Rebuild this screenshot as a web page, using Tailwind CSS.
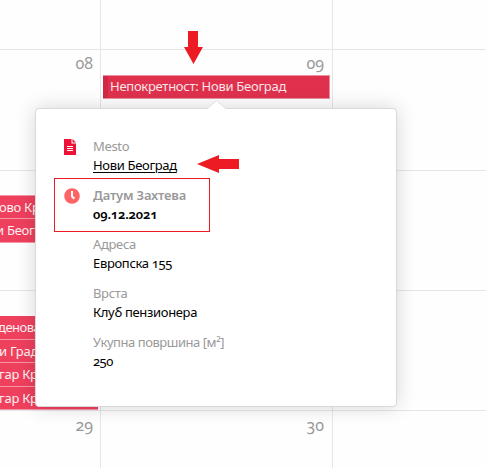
<!DOCTYPE html>
<html lang="sr">
<head>
<meta charset="utf-8">
<title>Календар</title>
<script src="https://cdn.jsdelivr.net/npm/@tailwindcss/browser@4"></script>
</head>
<body class="relative w-[486px] h-[468px] overflow-hidden bg-[#fefefe] font-['Noto_Sans','Open_Sans',sans-serif] oldstyle-nums text-[13px] text-black">
<main class="grid grid-cols-[100px_232px_154px] grid-rows-[49px_121px_120px_120px_58px] w-[486px] h-[468px] text-[#999]">
  <div></div><div class="border-l border-[#e6e6e6]"></div><div class="border-l border-[#e6e6e6]"></div>

  <div class="border-t border-[#e6e6e6] pt-[3px] pr-[7px] text-right text-[16px] leading-[20px]">08</div>
  <div class="border-t border-l border-[#e6e6e6]">
    <div class="h-[25px] pt-[3px] pr-[8px] text-right text-[16px] leading-[20px]">09</div>
    <div class="ml-[2px] mr-[2px] h-[24px] border border-[#e9909f] border-l-0 bg-[#df314d] flex items-center text-[#fbe4e8] whitespace-nowrap">
      <span class="w-[5px] h-full bg-[#d12945] mr-[2px]"></span><span class="tracking-[-0.27px]">Непокретност: Нови Београд</span>
    </div>
  </div>
  <div class="border-t border-l border-[#e6e6e6]"></div>

  <div class="border-t border-[#e6e6e6] pt-[24px] overflow-hidden text-[#fff0f2] whitespace-nowrap tracking-[-0.27px]">
    <div class="h-[24px] w-[98px] bg-[#ef405e] border-y border-[#f795a5] leading-[23px]"><span class="block -ml-[1px]">ово Краљево</span></div>
    <div class="h-[24px] w-[98px] bg-[#ef405e] border-b border-[#f795a5] leading-[23px]"><span class="block -ml-[4px]">и Београд</span></div>
  </div>
  <div class="border-t border-l border-[#e6e6e6]"></div>
  <div class="border-t border-l border-[#e6e6e6]"></div>

  <div class="border-t border-[#e6e6e6] pt-[25px] overflow-hidden text-[#fff0f2] whitespace-nowrap tracking-[-0.27px]">
    <div class="h-[24px] w-[98px] bg-[#ef405e] border-b border-[#f795a5] leading-[23px]"><span class="block -ml-[2px] tracking-[-0.5px]">деновац</span></div>
    <div class="h-[23px] w-[98px] bg-[#ef405e] border-b border-[#f795a5] leading-[23px]"><span class="block -ml-[1px]">и Градац</span></div>
    <div class="h-[24px] w-[98px] bg-[#ef405e] border-b border-[#f795a5] leading-[23px]"><span class="block -ml-[1px]">гар Краљево</span></div>
    <div class="h-[23px] w-[98px] bg-[#ef405e] border-b border-[#f795a5] leading-[23px]"><span class="block -ml-[1px]">гар Краљево</span></div>
  </div>
  <div class="border-t border-l border-[#e6e6e6]"></div>
  <div class="border-t border-l border-[#e6e6e6]"></div>

  <div class="border-t border-[#e6e6e6] pt-[4px] pr-[7px] text-right text-[16px] leading-[20px]">29</div>
  <div class="border-t border-l border-[#e6e6e6] pt-[4px] pr-[8px] text-right text-[16px] leading-[20px]">30</div>
  <div class="border-t border-l border-[#e6e6e6]"></div>
</main>

<section class="absolute left-[35px] top-[108px] w-[362px] h-[299px] rounded-[4px] border border-[#d9d9d9] bg-white shadow-[0_0_20px_rgba(0,0,0,0.16)] pt-[28px] pl-[28px] leading-[19px]">
  <svg class="absolute left-[171px] top-[-9px]" width="19" height="10" viewBox="0 0 19 10"><path d="M0 9 9.5 0 19 9V10H0Z" fill="#fff"/><path d="M.5 8.5 9.5 .5 18.5 8.5" fill="none" stroke="#ddd"/></svg>
  <dl class="grid grid-cols-[29px_1fr] gap-y-[11px] tracking-[-0.33px]">
    <dt><svg class="mt-[2px]" width="12" height="16" viewBox="0 0 12 16"><path d="M0 0H7.5V4.5H12V16H0ZM8.5 0 12 3.5H8.5Z" fill="#ee1238"/><path d="M3 7.5H9M3 9.5H9M3 11.5H9" stroke="#fff"/></svg></dt>
    <dd><p class="text-[#999]">Mesto</p><p><span class="underline underline-offset-2">Нови Београд</span></p></dd>
    <dt><svg class="mt-[2px]" width="16" height="16" viewBox="0 0 16 16"><circle cx="8" cy="8" r="7.8" fill="#ff6464"/><path d="M8 3V8.3L10.3 10.8" fill="none" stroke="#fff" stroke-width="2"/></svg></dt>
    <dd class="font-semibold tracking-[-0.2px]"><p class="text-[#999]">Датум Захтева</p><p>09.12.2021</p></dd>
    <dd class="col-start-2"><p class="text-[#999]">Адреса</p><p>Европска 155</p></dd>
    <dd class="col-start-2"><p class="text-[#999]">Врста</p><p>Клуб пензионера</p></dd>
    <dd class="col-start-2"><p class="text-[#999] tracking-[-0.45px]">Укупна површина [м²]</p><p class="tracking-[-0.5px]">250</p></dd>
  </dl>
</section>

<div class="absolute left-[54px] top-[178px] w-[156px] h-[54px] border border-[#ed1c24]"></div>
<svg class="absolute left-[184px] top-[31px]" width="19" height="33" viewBox="0 0 19 33"><path d="M4 0H14V16H19L9.5 33 0 16H4Z" fill="#ed1c24"/></svg>
<svg class="absolute left-[197px] top-[155px]" width="42" height="18" viewBox="0 0 42 18"><path d="M0 9 22 0V4H42V14H22V18Z" fill="#ed1c24"/></svg>
</body>
</html>
